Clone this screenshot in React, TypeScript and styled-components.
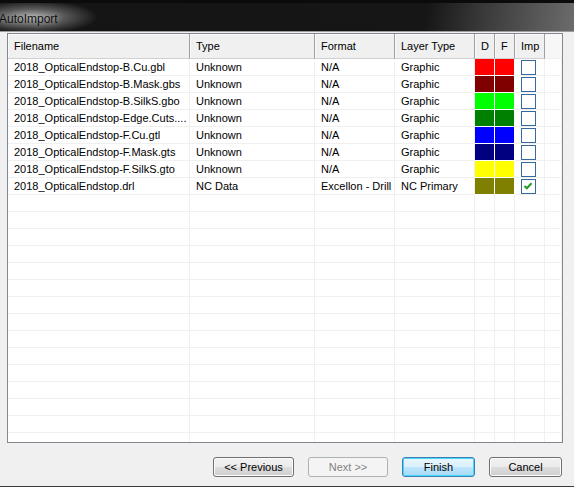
import { FunctionComponent } from "react";
import styled, { createGlobalStyle } from "styled-components";

const GlobalStyle = createGlobalStyle`
  html, body {
    margin: 0;
    padding: 0;
    background: #f0f0f0;
  }
  body {
    font-family: "Liberation Sans", Arial, sans-serif;
    font-size: 11px;
  }
`;

type FileRow = {
  name: string;
  type: string;
  format: string;
  layer: string;
  color?: string;
  checked?: boolean;
};

const files: FileRow[] = [
  { name: "2018_OpticalEndstop-B.Cu.gbl", type: "Unknown", format: "N/A", layer: "Graphic", color: "#ff0000" },
  { name: "2018_OpticalEndstop-B.Mask.gbs", type: "Unknown", format: "N/A", layer: "Graphic", color: "#800000" },
  { name: "2018_OpticalEndstop-B.SilkS.gbo", type: "Unknown", format: "N/A", layer: "Graphic", color: "#00ff00" },
  { name: "2018_OpticalEndstop-Edge.Cuts....", type: "Unknown", format: "N/A", layer: "Graphic", color: "#008000" },
  { name: "2018_OpticalEndstop-F.Cu.gtl", type: "Unknown", format: "N/A", layer: "Graphic", color: "#0000ff" },
  { name: "2018_OpticalEndstop-F.Mask.gts", type: "Unknown", format: "N/A", layer: "Graphic", color: "#000080" },
  { name: "2018_OpticalEndstop-F.SilkS.gto", type: "Unknown", format: "N/A", layer: "Graphic", color: "#ffff00" },
  { name: "2018_OpticalEndstop.drl", type: "NC Data", format: "Excellon - Drill", layer: "NC Primary", color: "#808000", checked: true },
];

const EMPTY_ROWS = 15;
const COLUMNS = "182px 125px 80px 80px 20px 20px 30px 1fr";

const Window = styled.div`
  width: 574px;
  height: 487px;
  display: flex;
  flex-direction: column;
  background: #f0f0f0;
  box-sizing: border-box;
  border-bottom: 1px solid #3a3a3a;
  overflow: hidden;
`;

const TitleBar = styled.div`
  height: 32px;
  flex-shrink: 0;
  display: flex;
  align-items: center;
  box-sizing: border-box;
  padding-top: 3px;
  border-top: 3px solid #0b0b0b;
  border-bottom: 1px solid #9c9c9c;
  background:
    radial-gradient(ellipse 66px 17px at 32px 14px, #a8a8a8 0%, rgba(130, 130, 130, 0.6) 50%, rgba(40, 40, 40, 0) 100%),
    linear-gradient(100deg, #141414 0%, #161616 74%, #3a3a3a 84%, #6c6c6c 100%);
`;

const TitleText = styled.span`
  font-family: "Liberation Sans", Arial, sans-serif;
  font-size: 12px;
  color: #111;
  margin-left: -1px;
  text-shadow: 0 0 6px rgba(255, 255, 255, 0.6);
`;

const Body = styled.div`
  flex: 1;
  display: flex;
  flex-direction: column;
  padding: 1px 11px 0 7px;
`;

const Grid = styled.div`
  height: 410px;
  box-sizing: border-box;
  border: 1px solid #828790;
  background: #fff;
  overflow: hidden;
`;

const HeaderRow = styled.div`
  display: grid;
  grid-template-columns: ${COLUMNS};
  height: 25px;
`;

const HeaderCell = styled.div<{ $filler?: boolean }>`
  display: flex;
  align-items: center;
  padding-left: 6px;
  box-sizing: border-box;
  color: #000;
  white-space: nowrap;
  background: ${(p) => (p.$filler ? "#f7f7f7" : "#f0f0f0")};
  border-right: ${(p) => (p.$filler ? "none" : "1px solid #a0a0a0")};
  border-bottom: 1px solid ${(p) => (p.$filler ? "#f0f0f0" : "#d0d0d0")};
  box-shadow: ${(p) => (p.$filler ? "none" : "inset 1px 1px 0 #fafafa")};
`;

const Row = styled.div`
  display: grid;
  grid-template-columns: ${COLUMNS};
  height: 17px;
`;

const Cell = styled.div`
  display: flex;
  align-items: center;
  padding-left: 6px;
  box-sizing: border-box;
  color: #000;
  white-space: nowrap;
  overflow: hidden;
  border-right: 1px solid #f0f0f0;
  border-bottom: 1px solid #f0f0f0;
`;

const Swatch = styled.div<{ $color?: string }>`
  box-sizing: border-box;
  background: ${(p) => p.$color ?? "#fff"};
  border-right: 1px solid ${(p) => (p.$color ? "#fff" : "#f0f0f0")};
  border-bottom: 1px solid ${(p) => (p.$color ? "#fff" : "#f0f0f0")};
`;

const CheckCell = styled.div`
  box-sizing: border-box;
  padding: 1px 0 0 6px;
  border-right: 1px solid #f0f0f0;
  border-bottom: 1px solid #f0f0f0;
`;

const CheckBox = styled.div`
  width: 15px;
  height: 15px;
  box-sizing: border-box;
  border: 1px solid #35699f;
  background: #fff;
`;

const ButtonRow = styled.div`
  display: flex;
  justify-content: flex-end;
  gap: 14px;
  padding: 14px 1px 0 0;
`;

const Button = styled.button<{ $width: number; $default?: boolean }>`
  width: ${(p) => p.$width}px;
  height: 20px;
  padding: 0;
  font-family: "Liberation Sans", Arial, sans-serif;
  font-size: 11px;
  color: #000;
  border-radius: 3px;
  border: 1px solid ${(p) => (p.$default ? "#3c7fb1" : "#707070")};
  box-shadow: inset 0 0 0 1px ${(p) => (p.$default ? "#48d7fb" : "#fcfcfc")};
  background: ${(p) =>
    p.$default
      ? "linear-gradient(#eaf6fd 0%, #d9f0fc 50%, #bee6fd 50%, #a7d9f5 100%)"
      : "linear-gradient(#f2f2f2 0%, #ebebeb 50%, #dddddd 50%, #cfcfcf 100%)"};

  &:disabled {
    color: #838383;
    border-color: #adb2b5;
    box-shadow: none;
    background: #f4f4f4;
  }
`;

const CheckMark: FunctionComponent = () => (
  <svg width="13" height="13" viewBox="0 0 13 13">
    <path d="M2.5 6 L4.8 8.3 L9.5 3.2" fill="none" stroke="#229a22" strokeWidth="2" />
  </svg>
);

const App: FunctionComponent = () => {
  return (
    <>
      <GlobalStyle />
      <Window>
        <TitleBar>
          <TitleText>AutoImport</TitleText>
        </TitleBar>
        <Body>
          <Grid>
            <HeaderRow>
              <HeaderCell>Filename</HeaderCell>
              <HeaderCell>Type</HeaderCell>
              <HeaderCell>Format</HeaderCell>
              <HeaderCell>Layer Type</HeaderCell>
              <HeaderCell>D</HeaderCell>
              <HeaderCell>F</HeaderCell>
              <HeaderCell>Imp</HeaderCell>
              <HeaderCell $filler />
            </HeaderRow>
            {files.map((f) => (
              <Row key={f.name}>
                <Cell>{f.name}</Cell>
                <Cell>{f.type}</Cell>
                <Cell>{f.format}</Cell>
                <Cell>{f.layer}</Cell>
                <Swatch $color={f.color} />
                <Swatch $color={f.color} />
                <CheckCell>
                  <CheckBox>{f.checked && <CheckMark />}</CheckBox>
                </CheckCell>
                <Cell />
              </Row>
            ))}
            {Array.from({ length: EMPTY_ROWS }).map((_, i) => (
              <Row key={"empty" + i}>
                <Cell />
                <Cell />
                <Cell />
                <Cell />
                <Cell />
                <Cell />
                <Cell />
                <Cell />
              </Row>
            ))}
          </Grid>
          <ButtonRow>
            <Button $width={81}>&lt;&lt; Previous</Button>
            <Button $width={80} disabled>
              Next &gt;&gt;
            </Button>
            <Button $width={73} $default>
              Finish
            </Button>
            <Button $width={73}>Cancel</Button>
          </ButtonRow>
        </Body>
      </Window>
    </>
  );
};

export default App;
